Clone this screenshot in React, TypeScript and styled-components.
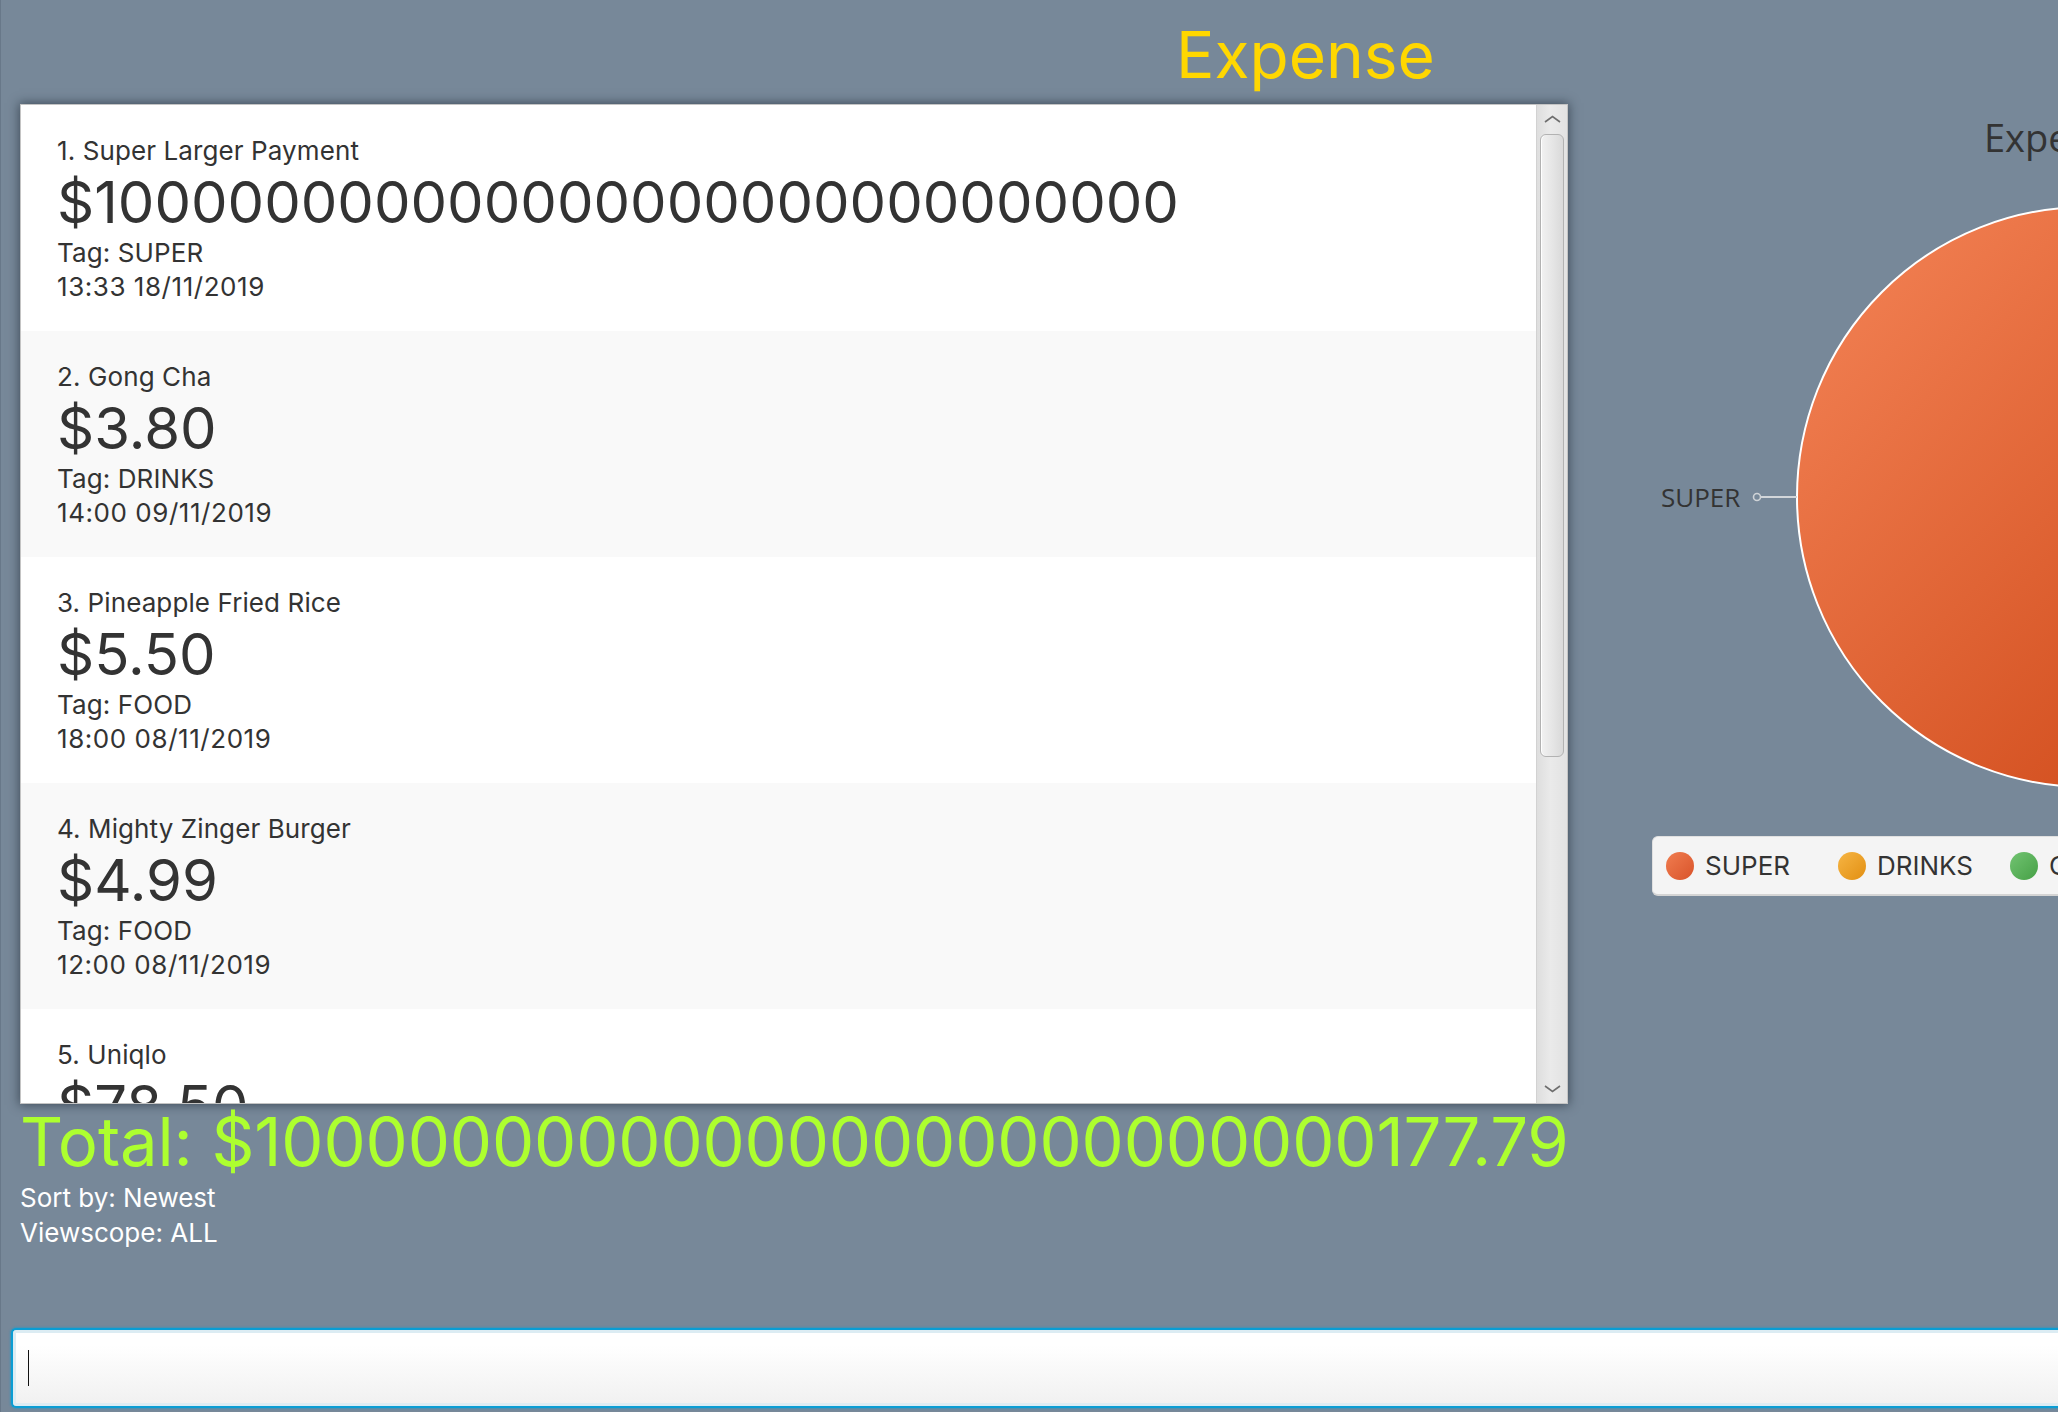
import React from 'react';
import styled, { createGlobalStyle } from 'styled-components';

const GlobalStyle = createGlobalStyle`
  html, body {
    margin: 0;
    padding: 0;
    width: 100%;
    height: 100%;
    overflow: hidden;
    background: #778899;
  }
  #root { height: 100%; }
`;

const Frame = styled.div`
  width: 2610px;
  height: 1412px;
  display: flex;
  flex-direction: column;
  box-sizing: border-box;
  border-left: 1px solid #687889;
  background: #778899;
  font-family: Inter, "Noto Sans", sans-serif;
  color: #333333;
`;

const Header = styled.header`
  flex: none;
  height: 104px;
  box-sizing: border-box;
  padding-top: 23px;
  display: flex;
  justify-content: center;
`;

const Title = styled.h1`
  margin: 0;
  font-size: 64px;
  line-height: 64px;
  font-weight: 400;
  color: #ffd700;
`;

const Main = styled.main`
  flex: 1;
  min-height: 0;
  display: grid;
  grid-template-columns: 1548px 1fr;
  padding-left: 19px;
`;

const LeftColumn = styled.section`
  display: flex;
  flex-direction: column;
`;

const ListPanel = styled.div`
  flex: none;
  height: 1000px;
  box-sizing: border-box;
  border: 1px solid #c4c4c4;
  background: #ffffff;
  box-shadow: 0 0 10px 1px rgba(20, 30, 40, 0.55);
  display: flex;
  overflow: hidden;
`;

const ListBody = styled.div`
  flex: 1;
  min-width: 0;
  overflow: hidden;
  display: flex;
  flex-direction: column;
`;

const Row = styled.div<{ $odd: boolean }>`
  flex: none;
  height: 226px;
  box-sizing: border-box;
  padding: 29px 0 0 36px;
  background: ${(p) => (p.$odd ? '#f9f9f9' : '#ffffff')};
  white-space: nowrap;
`;

const Name = styled.div`
  font-size: 26px;
  line-height: 34px;
  letter-spacing: 0.1px;
`;

const Amount = styled.div`
  font-size: 58px;
  line-height: 68px;
`;

const Meta = styled.div<{ $digits?: boolean }>`
  font-size: 26px;
  line-height: 34px;
  letter-spacing: ${(p) => (p.$digits ? '0.55px' : '0.1px')};
`;

const Scrollbar = styled.div`
  flex: none;
  width: 31px;
  display: flex;
  flex-direction: column;
  background: linear-gradient(to right, #dedede, #eaeaea 45%, #e2e2e2);
  border-left: 1px solid #d2d2d2;
  box-sizing: border-box;
`;

const ArrowButton = styled.div`
  flex: none;
  height: 28px;
  display: flex;
  align-items: center;
  justify-content: center;
`;

const Track = styled.div`
  flex: 1;
  padding: 1px 3px 0 3px;
`;

const Thumb = styled.div`
  height: 623px;
  box-sizing: border-box;
  border: 1px solid #b2b2b2;
  border-radius: 6px;
  background: linear-gradient(to right, #f2f2f2, #e6e6e6 50%, #d9d9d9);
  box-shadow: inset 1px 0 0 #ffffff;
`;

const Total = styled.div`
  margin-top: 2px;
  font-size: 67px;
  line-height: 72px;
  letter-spacing: -0.15px;
  color: #adff2f;
  white-space: nowrap;
`;

const StatusList = styled.div`
  padding-top: 2px;
  display: flex;
  flex-direction: column;
`;

const Status = styled.div`
  font-size: 26px;
  line-height: 35px;
  color: #ffffff;
`;

const ChartColumn = styled.section`
  display: flex;
  flex-direction: column;
`;

const ChartTitle = styled.div`
  margin-top: 10px;
  padding-left: 416px;
  font-family: "Open Sans", "Noto Sans", sans-serif;
  font-size: 38px;
  line-height: 46px;
  color: #333333;
  white-space: nowrap;
`;

const PieSvg = styled.svg`
  display: block;
  width: 100%;
  height: 660px;
  overflow: visible;
`;

const Legend = styled.div`
  margin: 16px 84px 0 84px;
  height: 60px;
  box-sizing: border-box;
  padding-left: 13px;
  background: #f4f4f4;
  border: 1px solid #e0e0e0;
  border-bottom: 2px solid #d4d4d4;
  border-radius: 6px;
  display: grid;
  grid-auto-flow: column;
  grid-auto-columns: 172px;
  align-items: center;
`;

const LegendItem = styled.div`
  display: flex;
  align-items: center;
  gap: 11px;
  font-size: 26px;
  color: #333333;
  white-space: nowrap;
`;

const Swatch = styled.span<{ $from: string; $to: string }>`
  width: 28px;
  height: 28px;
  border-radius: 50%;
  background: linear-gradient(to bottom right, ${(p) => p.$from}, ${(p) => p.$to});
`;

const CommandBox = styled.div`
  flex: none;
  height: 80px;
  margin: 0 0 4px 10px;
  box-sizing: border-box;
  border: 2px solid #0a9dd4;
  border-right: none;
  border-radius: 5px 0 0 5px;
  background: linear-gradient(#ffffff 20%, #f0f0f0);
  box-shadow: inset 0 0 0 3px #dcecf3, 0 0 2px 1px rgba(10, 157, 212, 0.45);
  display: flex;
  align-items: center;
  padding-left: 15px;
`;

const Caret = styled.span`
  width: 1px;
  height: 36px;
  background: #111111;
`;

const ChevronUp = () => (
  <svg width="17" height="8" viewBox="0 0 17 8">
    <polyline points="1,7 8.5,1.5 16,7" fill="none" stroke="#6e6e6e" strokeWidth="1.6" />
  </svg>
);

const ChevronDown = () => (
  <svg width="17" height="8" viewBox="0 0 17 8">
    <polyline points="1,1 8.5,6.5 16,1" fill="none" stroke="#6e6e6e" strokeWidth="1.6" />
  </svg>
);

type Expense = { name: string; amount: string; tag: string; time: string };

const expenses: Expense[] = [
  { name: 'Super Larger Payment', amount: '$1' + '0'.repeat(29), tag: 'SUPER', time: '13:33 18/11/2019' },
  { name: 'Gong Cha', amount: '$3.80', tag: 'DRINKS', time: '14:00 09/11/2019' },
  { name: 'Pineapple Fried Rice', amount: '$5.50', tag: 'FOOD', time: '18:00 08/11/2019' },
  { name: 'Mighty Zinger Burger', amount: '$4.99', tag: 'FOOD', time: '12:00 08/11/2019' },
  { name: 'Uniqlo', amount: '$78.50', tag: 'CLOTHES', time: '15:20 07/11/2019' },
  { name: 'Concert Ticket', amount: '$85.00', tag: 'CLOTHES', time: '20:00 05/11/2019' },
];

const legend = [
  { label: 'SUPER', from: '#f07d50', to: '#d9532a' },
  { label: 'DRINKS', from: '#f6b544', to: '#e28f12' },
  { label: 'CLOTHES', from: '#72c472', to: '#46a046' },
];

export default function App() {
  return (
    <>
      <GlobalStyle />
      <Frame>
        <Header>
          <Title>Expense</Title>
        </Header>
        <Main>
          <LeftColumn>
            <ListPanel>
              <ListBody>
                {expenses.map((e, i) => (
                  <Row key={i} $odd={i % 2 === 1}>
                    <Name>
                      {i + 1}. {e.name}
                    </Name>
                    <Amount>{e.amount}</Amount>
                    <Meta>Tag: {e.tag}</Meta>
                    <Meta $digits>{e.time}</Meta>
                  </Row>
                ))}
              </ListBody>
              <Scrollbar>
                <ArrowButton>
                  <ChevronUp />
                </ArrowButton>
                <Track>
                  <Thumb />
                </Track>
                <ArrowButton>
                  <ChevronDown />
                </ArrowButton>
              </Scrollbar>
            </ListPanel>
            <Total>Total: {'$1' + '0'.repeat(26) + '177.79'}</Total>
            <StatusList>
              <Status>Sort by: Newest</Status>
              <Status>Viewscope: ALL</Status>
            </StatusList>
          </LeftColumn>
          <ChartColumn>
            <ChartTitle>Expenses</ChartTitle>
            <PieSvg viewBox="0 0 1042 660" preserveAspectRatio="xMinYMin meet">
              <defs>
                <linearGradient id="superSlice" x1="0" y1="0" x2="1" y2="1">
                  <stop offset="0" stopColor="#f58558" />
                  <stop offset="1" stopColor="#c9400f" />
                </linearGradient>
              </defs>
              <circle cx="519" cy="337" r="290" fill="url(#superSlice)" stroke="#ffffff" strokeWidth="2" />
              <line x1="192" y1="337" x2="229" y2="337" stroke="#d2d6da" strokeWidth="2" />
              <circle cx="189" cy="337" r="3.5" fill="none" stroke="#cfd3d7" strokeWidth="1.6" />
              <text
                x="93"
                y="347"
                fontFamily="'Open Sans', 'Noto Sans', sans-serif"
                fontSize="26"
                fill="#333333"
              >
                SUPER
              </text>
            </PieSvg>
            <Legend>
              {legend.map((l) => (
                <LegendItem key={l.label}>
                  <Swatch $from={l.from} $to={l.to} />
                  {l.label}
                </LegendItem>
              ))}
            </Legend>
          </ChartColumn>
        </Main>
        <CommandBox>
          <Caret />
        </CommandBox>
      </Frame>
    </>
  );
}
